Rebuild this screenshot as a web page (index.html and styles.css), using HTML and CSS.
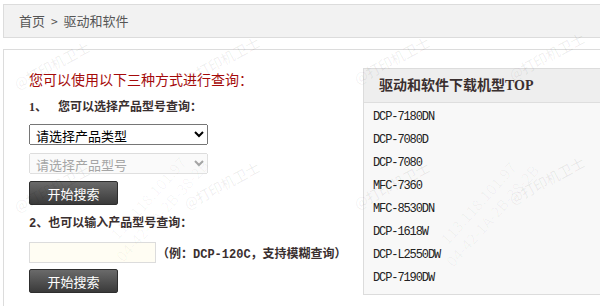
FILE: index.html
```html
<!DOCTYPE html>
<html>
<head>
<meta charset="UTF-8">
<title>驱动和软件</title>
<link rel="stylesheet" href="styles.css">
</head>
<body>

<div class="crumb">
	<a href="#">首页</a> <span class="sep">&gt;</span> 驱动和软件
</div>

<div class="main">
	<div class="query">
		<h2 class="title">您可以使用以下三种方式进行查询：</h2>

		<p class="step"><span class="num">1、</span> 您可以选择产品型号查询：</p>
		<select class="pick">
			<option>请选择产品类型</option>
		</select>
		<select class="pick" disabled>
			<option>请选择产品型号</option>
		</select>
		<button class="btn" type="button">开始搜索</button>

		<p class="step step2">2、也可以输入产品型号查询：</p>
		<div class="row">
			<input class="model" type="text">
			<span class="hint">（例：DCP-120C，支持模糊查询）</span>
		</div>
		<button class="btn" type="button">开始搜索</button>
	</div>

	<div class="top">
		<div class="top-head">驱动和软件下载机型TOP</div>
		<ul class="top-list">
			<li>DCP-7180DN</li>
			<li>DCP-7080D</li>
			<li>DCP-7080</li>
			<li>MFC-7360</li>
			<li>MFC-8530DN</li>
			<li>DCP-1618W</li>
			<li>DCP-L2550DW</li>
			<li>DCP-7190DW</li>
		</ul>
	</div>
</div>

<!-- watermark -->
<div class="wm">
	<span class="wm-name" style="left: 10px; top: 55px">@打印机卫士</span>
	<span class="wm-name" style="left: 180px; top: 50px">@打印机卫士</span>
	<span class="wm-name" style="left: 350px; top: 50px">@打印机卫士</span>
	<span class="wm-name" style="left: 505px; top: 46px">@打印机卫士</span>
	<span class="wm-name" style="left: 10px; top: 178px">@打印机卫士</span>
	<span class="wm-name" style="left: 180px; top: 175px">@打印机卫士</span>
	<span class="wm-name" style="left: 350px; top: 175px">@打印机卫士</span>
	<span class="wm-name" style="left: 505px; top: 170px">@打印机卫士</span>
	<span class="wm-ip" style="left: 90px; top: 185px">113.118.101.97<br>04-42-1A-2B-38-2B</span>
	<span class="wm-ip" style="left: 420px; top: 190px">113.118.101.97<br>04-42-1A-2B-38-2B</span>
</div>

</body>
</html>
```

FILE: styles.css
```css
html, body
{
	margin: 0;
	overflow: hidden;
}

body
{
	position: relative;
	width: 640px;
	height: 306px;
	padding: 4px 0 0 3px;
	font-family: "Noto Sans CJK SC", "Noto Sans", sans-serif;
	color: #333;
	background: #fff;
}

.crumb
{
	height: 32px;
	line-height: 32px;
	padding-left: 15px;
	border: 1px solid #dcdcdc;
	background-color: #f2f2f2;
	font-size: 13px;
	color: #555;
}

.crumb a
{
	color: #555;
	text-decoration: none;
}

.crumb .sep
{
	font-size: 12px;
	padding: 0 3px;
}

.main
{
	margin-top: 11px;
	border-top: 1px solid #dcdcdc;
	border-left: 1px solid #dcdcdc;
	display: flex;
	height: 260px;
}

.query
{
	width: 334px;
	padding: 19px 0 0 25px;
}

.title
{
	margin: 0;
	font-size: 14px;
	font-weight: normal;
	line-height: 20px;
	color: #a50a0a;
}

.step
{
	margin: 9px 0 0 0;
	font-family: "Liberation Serif", "Noto Sans CJK SC", serif;
	font-size: 12px;
	font-weight: bold;
	line-height: 18px;
	color: #3a2f2f;
}

.step .num
{
	padding-right: 8px;
}

.step2
{
	margin-top: 10px;
	font-family: "Liberation Mono", "Noto Sans CJK SC", monospace;
}

.pick
{
	display: block;
	width: 179px;
	height: 21px;
	margin-top: 8px;
	font-family: "Noto Sans CJK SC", sans-serif;
	font-size: 13px;
	padding: 0 2px;
}

.pick + .pick
{
	margin-top: 8px;
}

.btn
{
	display: block;
	width: 89px;
	height: 24px;
	margin-top: 7px;
	border: 1px solid #2e2e2e;
	border-radius: 2px;
	background: linear-gradient(#6a6a6a, #3a3a3a);
	color: #fff;
	font-family: "Noto Sans CJK SC", sans-serif;
	font-size: 13px;
	padding: 0;
}

.row
{
	display: flex;
	align-items: center;
	margin-top: 9px;
}

.model
{
	width: 121px;
	height: 19px;
	margin: 0;
	padding: 0 2px;
	border: 1px solid #dcdcdc;
	background-color: #fffdf3;
}

.hint
{
	font-family: "Liberation Mono", "Noto Sans CJK SC", monospace;
	font-size: 12px;
	font-weight: bold;
	color: #3a2f2f;
	margin-left: 1px;
}

.row + .btn
{
	margin-top: 6px;
}

.top
{
	margin-top: 18px;
	width: 260px;
	height: 225px;
	border: 1px solid #dcdcdc;
	background-color: #f8f8f8;
}

.top-head
{
	height: 33px;
	line-height: 33px;
	padding-left: 15px;
	border-bottom: 1px solid #dedede;
	background-color: #eeeeee;
	font-family: "Liberation Serif", "Noto Sans CJK SC", serif;
	font-size: 14px;
	font-weight: bold;
	color: #3a2f2f;
}

.top-list
{
	list-style: none;
	margin: 0;
	padding: 3px 0 0 9px;
}

.top-list li
{
	height: 23px;
	line-height: 23px;
	font-family: "Liberation Mono", "DejaVu Sans Mono", monospace;
	font-size: 12px;
	letter-spacing: -1.1px;
	color: #222;
}

.wm
{
	position: absolute;
	left: 0;
	top: 0;
	width: 600px;
	height: 306px;
	pointer-events: none;
}

.wm-name,
.wm-ip
{
	position: absolute;
	white-space: nowrap;
	font-family: "Noto Sans CJK SC", sans-serif;
}

.wm-name
{
	font-size: 14px;
	transform: rotate(-28deg);
	color: rgba(0, 0, 0, 0.07);
}

.wm-ip
{
	font-size: 15px;
	line-height: 19px;
	transform: rotate(-48deg);
	text-align: center;
	color: rgba(0, 0, 0, 0.035);
}
```
